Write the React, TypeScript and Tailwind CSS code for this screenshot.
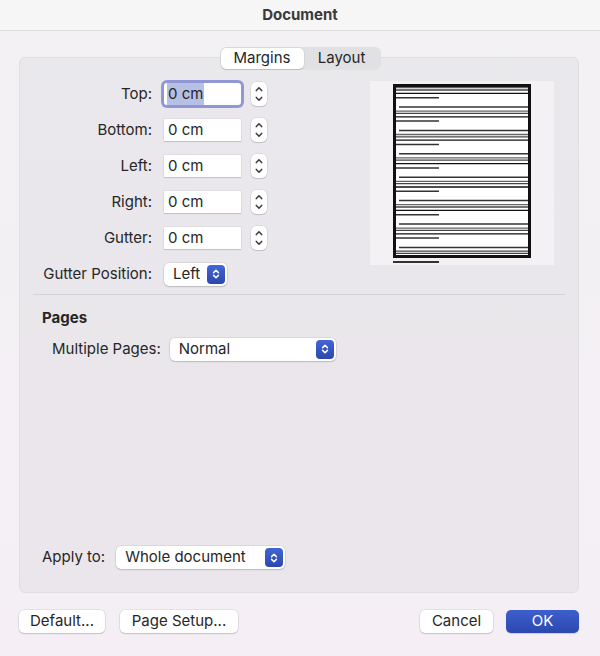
import React from "react";

const font = { fontFamily: "Inter, 'Liberation Sans', sans-serif" };

const Chevrons = ({ className }: { className?: string }) => (
  <svg viewBox="0 0 10 14" className={className}>
    <path
      d="M2.6 5.6 5 3.2l2.4 2.4M2.6 8.4 5 10.8l2.4-2.4"
      fill="none"
      stroke="currentColor"
      strokeWidth="1.5"
      strokeLinecap="round"
      strokeLinejoin="round"
    />
  </svg>
);

const Stepper = () => (
  <div className="ml-[10px] w-[16px] h-[24px] bg-white rounded-[5px] shadow-[0_0_0_0.5px_rgba(0,0,0,0.12),0_1px_1px_rgba(0,0,0,0.12)] flex items-center justify-center text-[#3a3a3a]">
    <svg viewBox="0 0 10 22" className="w-[10px] h-[22px]">
      <path
        d="M2.3 7.6 5 4.8l2.7 2.8M2.3 14.4 5 17.2l2.7-2.8"
        fill="none"
        stroke="currentColor"
        strokeWidth="1.5"
        strokeLinecap="round"
        strokeLinejoin="round"
      />
    </svg>
  </div>
);

const SelectBox = ({ value, width }: { value: string; width: string }) => (
  <div
    className={`${width} h-[23px] bg-white rounded-[5px] shadow-[0_0_0_0.5px_rgba(0,0,0,0.12),0_1px_1.5px_rgba(0,0,0,0.15)] flex items-center justify-between pl-[9px] pr-[2px]`}
  >
    <span>{value}</span>
    <div className="w-[18px] h-[19px] rounded-[4px] bg-gradient-to-b from-[#4266d6] to-[#2c47ae] text-white flex items-center justify-center">
      <Chevrons className="w-[10px] h-[14px]" />
    </div>
  </div>
);

const FieldRow = ({ label, focused }: { label: string; focused?: boolean }) => (
  <div className="flex items-center h-[36px]">
    <div className="w-[132px] text-right shrink-0 whitespace-nowrap">{label}</div>
    <div
      className={
        focused
          ? "ml-[12px] w-[77px] h-[22px] bg-white rounded-[3px] shadow-[0_0_0_3px_#9197d6] flex items-center pl-[3px]"
          : "ml-[12px] w-[77px] h-[22px] bg-white shadow-[0_0_0_0.5px_rgba(0,0,0,0.08),0_1px_1px_rgba(0,0,0,0.12)] flex items-center pl-[4px]"
      }
    >
      {focused ? <span className="bg-[#b6bfe4] px-[1px]">0 cm</span> : <span>0 cm</span>}
    </div>
    <Stepper />
  </div>
);

const Preview = () => {
  const lines: React.ReactNode[] = [];
  for (let i = 0; i < 7; i++) {
    const s = 16.7 + 23.4 * i;
    const full = [
      { y: s - 10, c: "#666" },
      { y: s - 7.7, c: "#444" },
      { y: s - 4.3, c: "#111" },
    ];
    full.forEach((l, j) =>
      lines.push(<line key={`f${i}${j}`} x1={26} x2={158} y1={l.y} y2={l.y} stroke={l.c} strokeWidth={1.3} />)
    );
    lines.push(<line key={`s${i}`} x1={26} x2={69} y1={s} y2={s} stroke="#333" strokeWidth={1.5} />);
    if (s + 9.3 < 174)
      lines.push(<line key={`g${i}`} x1={29} x2={158} y1={s + 9.3} y2={s + 9.3} stroke="#333" strokeWidth={1.5} />);
  }
  [170.1, 172.4].forEach((y, j) =>
    lines.push(<line key={`b${j}`} x1={26} x2={158} y1={y} y2={y} stroke="#444" strokeWidth={1.3} />)
  );
  return (
    <div className="mt-[23px] mr-[24px] w-[184px] h-[184px] bg-[#f3f1f4]">
      <svg width="184" height="184" viewBox="0 0 184 184">
        <rect x={23} y={3} width={138} height={174} fill="#fff" />
        {lines}
        <rect x={24.5} y={4.5} width={135} height={171} fill="none" stroke="#111" strokeWidth={3} />
        <line x1={23} x2={69} y1={181} y2={181} stroke="#333" strokeWidth={1.8} />
      </svg>
    </div>
  );
};

const Button = ({ children, width }: { children: React.ReactNode; width: string }) => (
  <div
    className={`${width} h-[23px] bg-white rounded-[5px] shadow-[0_0_0_0.5px_rgba(0,0,0,0.12),0_1px_1.5px_rgba(0,0,0,0.15)] flex items-center justify-center`}
  >
    {children}
  </div>
);

export default function App() {
  return (
    <div
      style={font}
      className="w-[600px] h-[656px] bg-gradient-to-b from-[#f2f1f3] to-[#f5eff5] text-[15px] text-[#262626] flex flex-col overflow-hidden"
    >
      {/* Title bar */}
      <div className="h-[31px] shrink-0 bg-[#f6f6f6] border-b border-[#dcdcdc] flex items-center justify-center">
        <span className="text-[15px] font-bold text-[#3a3a3a]">Document</span>
      </div>

      {/* Tabs */}
      <div className="mt-[16px] -mb-[13px] flex justify-center relative z-10">
        <div className="flex h-[23px] w-[161px] bg-[#e1e0e3] rounded-[6px] p-[1px]">
          <div className="w-[83px] h-full bg-white rounded-[5px] shadow-[0_0_0_0.5px_rgba(0,0,0,0.08),0_1px_1px_rgba(0,0,0,0.12)] flex items-center justify-center">
            Margins
          </div>
          <div className="flex-1 flex items-center justify-center">Layout</div>
        </div>
      </div>

      {/* Panel */}
      <div className="ml-[19px] mr-[21px] h-[536px] shrink-0 bg-gradient-to-b from-[#e9e8eb] to-[#ebe6ec] rounded-[6px] border border-[#e0dee2] flex flex-col">
        <div className="flex justify-between">
          <div className="pt-[18px] flex flex-col">
            <FieldRow label="Top:" focused />
            <FieldRow label="Bottom:" />
            <FieldRow label="Left:" />
            <FieldRow label="Right:" />
            <FieldRow label="Gutter:" />
            <div className="flex items-center h-[36px]">
              <div className="w-[132px] text-right shrink-0 whitespace-nowrap">Gutter Position:</div>
              <div className="ml-[12px]">
                <SelectBox value="Left" width="w-[63px]" />
              </div>
            </div>
          </div>
          <Preview />
        </div>

        <div className="mt-[2px] mx-[13px] h-px bg-[#d4d2d6]" />

        <div className="mt-[12px] pl-[22px] font-bold">Pages</div>
        <div className="mt-[8px] flex items-center pl-[32px]">
          <span className="whitespace-nowrap">Multiple Pages:</span>
          <div className="ml-[9px]">
            <SelectBox value="Normal" width="w-[166px]" />
          </div>
        </div>

        <div className="flex-1" />

        <div className="mb-[23px] flex items-center pl-[22px]">
          <span className="whitespace-nowrap">Apply to:</span>
          <div className="ml-[11px]">
            <SelectBox value="Whole document" width="w-[169px]" />
          </div>
        </div>
      </div>

      {/* Bottom buttons */}
      <div className="mt-[17px] ml-[19px] mr-[21px] flex justify-between">
        <div className="flex gap-[15px]">
          <Button width="w-[86px]">Default...</Button>
          <Button width="w-[118px]">Page Setup...</Button>
        </div>
        <div className="flex gap-[13px]">
          <Button width="w-[73px]">Cancel</Button>
          <div className="w-[73px] h-[23px] rounded-[5px] bg-gradient-to-b from-[#3d5fcf] to-[#2c48ae] text-white flex items-center justify-center shadow-[0_1px_1px_rgba(0,0,0,0.15)]">
            OK
          </div>
        </div>
      </div>
    </div>
  );
}
